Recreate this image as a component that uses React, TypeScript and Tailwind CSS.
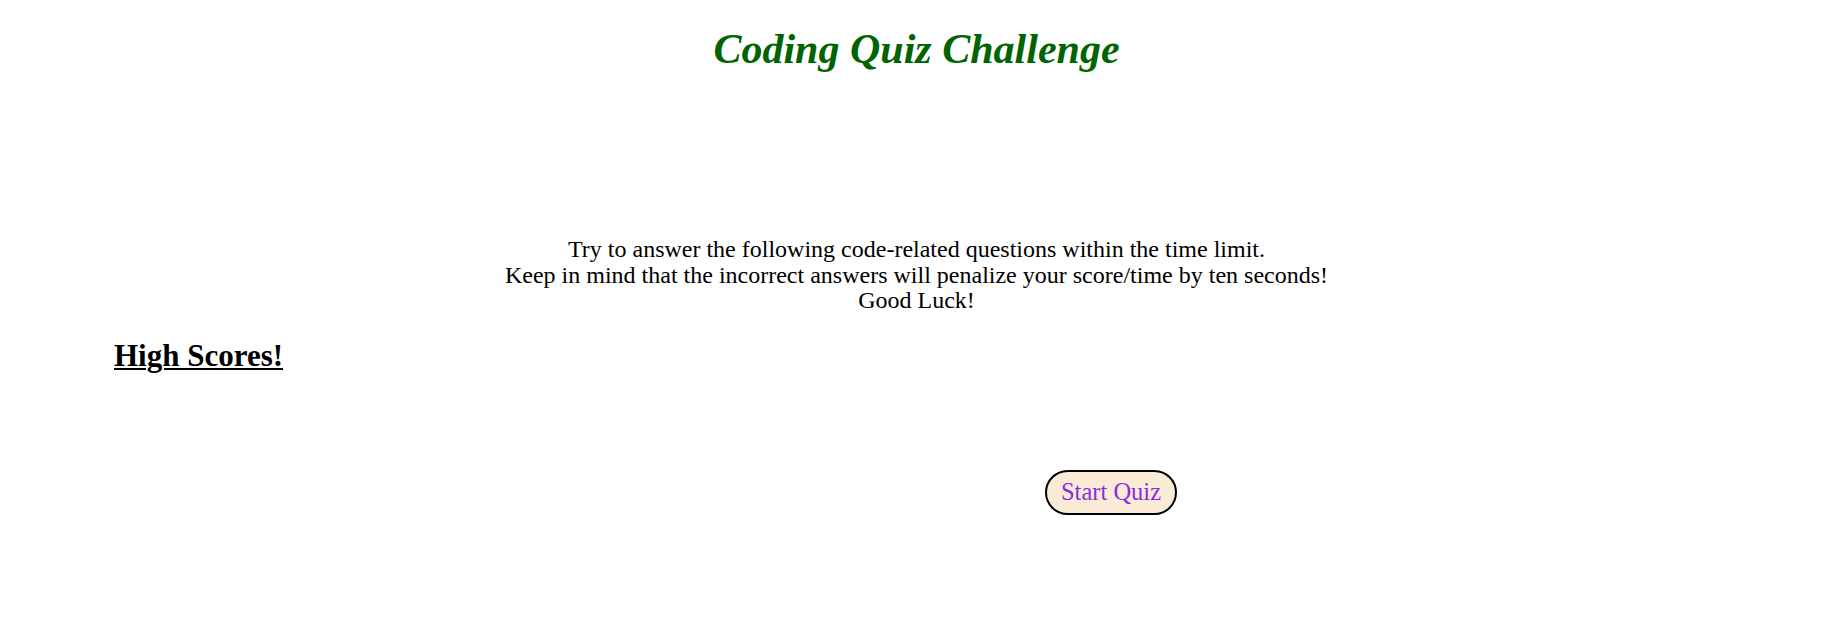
export default function App() {
  return (
    <div className="min-h-[619px] w-full bg-white font-['Liberation_Serif',serif] text-black">
      <header className="flex justify-center pt-[23px]">
        <h1 className="text-[42px] font-bold italic leading-[52px] text-[#006400]">
          Coding Quiz Challenge
        </h1>
      </header>

      <main>
        <section className="mt-[162px] text-center text-[24px] leading-[25.5px]">
          <p>Try to answer the following code-related questions within the time limit.</p>
          <p>Keep in mind that the incorrect answers will penalize your score/time by ten seconds!</p>
          <p>Good Luck!</p>
        </section>

        <h2 className="mt-[24px] pl-[114px] text-[31px] font-bold leading-[36px]">
          <a href="#" className="underline decoration-2 underline-offset-2">High Scores!</a>
        </h2>

        <div className="mt-[96px] flex pl-[1045px]">
          <button className="h-[45px] w-[132px] rounded-full border-2 border-black bg-[#faebd7] text-[24.5px] text-[#8a2be2]">
            Start Quiz
          </button>
        </div>
      </main>
    </div>
  )
}
